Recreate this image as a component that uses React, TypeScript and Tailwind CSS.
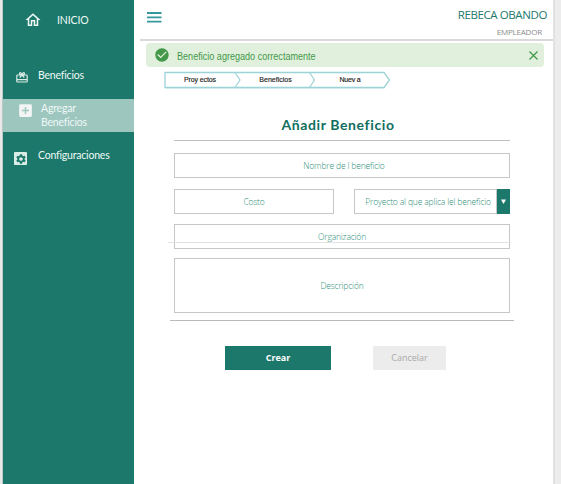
import React from "react";
import { MdOutlineHome, MdCheckCircle, MdAddBox, MdSettings } from "react-icons/md";

function GiftIcon() {
  return (
    <svg width="12" height="12" viewBox="0 0 12 12" fill="none" stroke="#d9ece6" strokeWidth="1.200">
      <path d="M1.500 4h9a.7.7 0 0 1 .7.7v5.600a.7.7 0 0 1-.7.7h-9a.7.7 0 0 1-.7-.7V4.700a.7.7 0 0 1 .7-.7z" />
      <path d="M1 8.700h10M3.700 6.500 6 4l2.300 2.500M6 4C4.800 4 3.200 3.600 3.500 2.300S5.500 1.800 6 4C6.500 1.800 8.200 1 8.500 2.300S7.200 4 6 4z" />
    </svg>
  );
}

function Breadcrumb() {
  return (
    <div className="relative ml-[30px] mt-1 flex h-[19px] w-[228px] font-['Liberation_Sans',sans-serif] text-[7px] leading-[18px] text-[#222] [-webkit-text-stroke:0.15px_#222]">
      <svg className="absolute inset-0" width="228" height="19" viewBox="0 0 228 19" fill="none">
        <path d="M1 3h219l5 8-5 7H1z" fill="#e5f3f4" />
        <path d="M1 1.500h219l5.500 7.500-5.500 7.500H1z" fill="white" stroke="#9dd2d6" strokeWidth="1.300" />
        <path d="m71 1.500 5 7.500-5 7.500M145.500 1.500l5 7.500-5 7.500" stroke="#9dd2d6" strokeWidth="1.200" />
      </svg>
      <span className="relative w-[72px] text-center tracking-[-0.1px]">Proy ectos</span>
      <span className="relative w-[79px] text-center">Beneficios</span>
      <span className="relative w-[70px] text-center tracking-[-0.2px]">Nuev a</span>
    </div>
  );
}

function Field({ className, children }: { className: string; children: React.ReactNode }) {
  return (
    <div className={`flex items-center justify-center border border-[#c5c7c7] pt-[2px] whitespace-nowrap text-[8.5px] font-light text-[#2f8f79] tracking-[-0.16px] ${className}`}>
      {children}
    </div>
  );
}

export default function App() {
  return (
    <div className="flex h-[484px] w-[561px] overflow-hidden bg-white font-['Open_Sans','Noto_Sans',sans-serif]">
      <div className="w-[3px] shrink-0 border-r border-[#b9c9c5] bg-[#e9e9e9]" />
      <aside className="w-[131px] shrink-0 bg-[#1c786b] font-['Lato',sans-serif] text-[10.500px] text-[#eef8f5]">
        <div className="flex h-[39px] items-center pl-[21px]">
          <MdOutlineHome size={18} />
          <span className="ml-[15px] mt-0.5 tracking-[-0.1px]">INICIO</span>
        </div>
        <div className="flex h-[60px] pl-[13px] pt-[28px]">
          <div className="w-[22px] pt-1"><GiftIcon /></div>
          <span className="leading-4 tracking-[-0.2px]">Beneficios</span>
        </div>
        <div className="flex h-[33px] bg-[#9dc6bf] pl-[14px]">
          <MdAddBox size={17} className="mt-[3px] shrink-0 text-[#f2f5f4]" />
          <span className="ml-[7px] w-[60px] pt-[2px] leading-[14px] tracking-[-0.2px]">Agregar Beneficios</span>
        </div>
        <div className="flex pl-[11px] pt-[15px]">
          <div className="mt-[5px] flex h-[13px] w-[13px] shrink-0 items-center justify-center rounded-[1px] bg-[#d9ece6] text-[#1c786b]">
            <MdSettings size={12} />
          </div>
          <span className="ml-[11px] leading-4 tracking-[-0.2px]">Configuraciones</span>
        </div>
      </aside>
      <main className="w-[419px] shrink-0">
        <header className="ml-[6px] flex h-[41px] w-[415px] justify-between border-b-2 border-[#d9d9d9] pl-[7px] pr-2">
          <svg className="mt-3" width="15" height="11" viewBox="0 0 15 11" stroke="#35989b" strokeWidth="1.800">
            <path d="M0 1h14.500M0 5.300h14.500M0 9.600h14.500" />
          </svg>
          <div className="text-right">
            <div className="mt-[8px] text-[11.500px] leading-[14px] tracking-[-0.4px] text-[#1c786b]">REBECA OBANDO</div>
            <div className="mr-[5px] mt-[5px] text-[8px] leading-[10px] tracking-[-0.2px] text-[#8b8b8b]">EMPLEADOR</div>
          </div>
        </header>
        <div className="ml-3 mt-[2px] flex h-[24px] w-[398px] items-center rounded-sm bg-[#e1f0dc] px-2 text-[#43984a]">
          <MdCheckCircle size={16} />
          <span className="ml-[7px] mt-[2px] inline-block origin-left scale-x-[0.907] whitespace-nowrap font-['Liberation_Sans',sans-serif] text-[10px]">Beneficio agregado correctamente</span>
          <svg className="ml-auto mr-[-3px]" width="11" height="11" viewBox="0 0 11 11" stroke="currentColor" strokeWidth="1.300">
            <path d="m1.500 1.500 8 8M9.500 1.500l-8 8" />
          </svg>
        </div>
        <Breadcrumb />
        <div className="ml-[36px] mt-[23px] w-[344px]">
          <div className="ml-1 w-[336px]">
            <h1 className="flex h-[28px] justify-center border-b border-[#bfc1c1] pr-2 pt-[2px] font-['Lato',sans-serif] text-[14px] font-bold leading-[20px] tracking-[0.62px] text-[#0f6e60]">Añadir Beneficio</h1>
            <Field className="mt-3 h-[25px] pl-1">Nombre de l beneficio</Field>
            <div className="mt-[11px] flex justify-between">
              <Field className="h-[25px] w-[160px]">Costo</Field>
              <div className="flex h-[25px] w-[156px]">
                <Field className="h-[25px] w-[143px] pl-[5px]">Proyecto al que aplica lel beneficio</Field>
                <div className="flex w-[13px] items-center justify-center bg-[#1c786b]">
                  <svg width="5" height="5" viewBox="0 0 5 5"><path d="M0 .5h5L2.500 5z" fill="white" /></svg>
                </div>
              </div>
            </div>
            <div className="relative mt-[10px]">
              <Field className="h-[25px]">Organización</Field>
              <div className="absolute -left-1.5 top-[18px] h-px w-[343px] bg-[#e2e2e2]" />
            </div>
            <Field className="mt-[9px] h-[55px]">Descripción</Field>
          </div>
          <div className="mt-[7px] h-px bg-[#b9bbbb]" />
          <div className="mt-[25px] flex pl-[55px]">
            <button className="h-[24px] w-[106px] bg-[#1c786b] text-[9px] font-bold text-white">Crear</button>
            <button className="ml-[42px] h-[24px] w-[73px] bg-[#ececec] text-[9px] text-[#aaa]">Cancelar</button>
          </div>
        </div>
      </main>
      <div className="flex-1 border-l-2 border-[#e2e2e2] bg-[#ececec]" />
    </div>
  );
}
